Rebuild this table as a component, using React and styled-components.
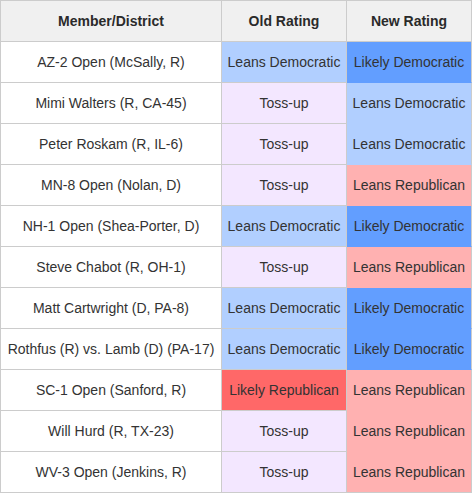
import React from 'react'
import styled, { createGlobalStyle } from 'styled-components'

const GlobalStyle = createGlobalStyle`
  html, body {
    margin: 0;
    padding: 0;
    background: #ffffff;
  }
  body {
    font-family: "Liberation Sans", Arial, sans-serif;
  }
`

const colors = {
  'Likely Democratic': '#629eff',
  'Leans Democratic': '#b1cfff',
  'Toss-up': '#f3e7ff',
  'Leans Republican': '#ffb1b1',
  'Likely Republican': '#ff6868'
}

const rows = [
  ['AZ-2 Open (McSally, R)', 'Leans Democratic', 'Likely Democratic'],
  ['Mimi Walters (R, CA-45)', 'Toss-up', 'Leans Democratic'],
  ['Peter Roskam (R, IL-6)', 'Toss-up', 'Leans Democratic'],
  ['MN-8 Open (Nolan, D)', 'Toss-up', 'Leans Republican'],
  ['NH-1 Open (Shea-Porter, D)', 'Leans Democratic', 'Likely Democratic'],
  ['Steve Chabot (R, OH-1)', 'Toss-up', 'Leans Republican'],
  ['Matt Cartwright (D, PA-8)', 'Leans Democratic', 'Likely Democratic'],
  ['Rothfus (R) vs. Lamb (D) (PA-17)', 'Leans Democratic', 'Likely Democratic'],
  ['SC-1 Open (Sanford, R)', 'Likely Republican', 'Leans Republican'],
  ['Will Hurd (R, TX-23)', 'Toss-up', 'Leans Republican'],
  ['WV-3 Open (Jenkins, R)', 'Toss-up', 'Leans Republican']
]

const Table = styled.table`
  border-collapse: separate;
  border-spacing: 0;
  border-top: 1px solid #cccccc;
  border-left: 1px solid #cccccc;
  table-layout: fixed;
  width: 472px;
  font-size: 14px;
  color: #333333;
`

const HeadCell = styled.th`
  height: 40px;
  padding: 0;
  background: #f0f0f0;
  font-weight: bold;
  color: #2a2a2a;
  text-align: center;
  border-right: 1px solid #cccccc;
  border-bottom: 1px solid #cccccc;
`

const Cell = styled.td`
  height: 40px;
  padding: 0;
  text-align: center;
  white-space: nowrap;
  background: ${p => p.$bg || '#ffffff'};
  border-right: 1px solid #cccccc;
  border-bottom: 1px solid ${p => p.$flat ? p.$bg : '#cccccc'};
`

export default function App () {
  return (
    <>
      <GlobalStyle />
      <Table>
        <colgroup>
          <col style={{ width: 221 }} />
          <col style={{ width: 125 }} />
          <col style={{ width: 125 }} />
        </colgroup>
        <thead>
          <tr>
            <HeadCell>Member/District</HeadCell>
            <HeadCell>Old Rating</HeadCell>
            <HeadCell>New Rating</HeadCell>
          </tr>
        </thead>
        <tbody>
          {rows.map((row, i) => (
            <tr key={i}>
              <Cell>{row[0]}</Cell>
              <Cell $bg={colors[row[1]]}>{row[1]}</Cell>
              <Cell $bg={colors[row[2]]} $flat={i < rows.length - 1}>{row[2]}</Cell>
            </tr>
          ))}
        </tbody>
      </Table>
    </>
  )
}
